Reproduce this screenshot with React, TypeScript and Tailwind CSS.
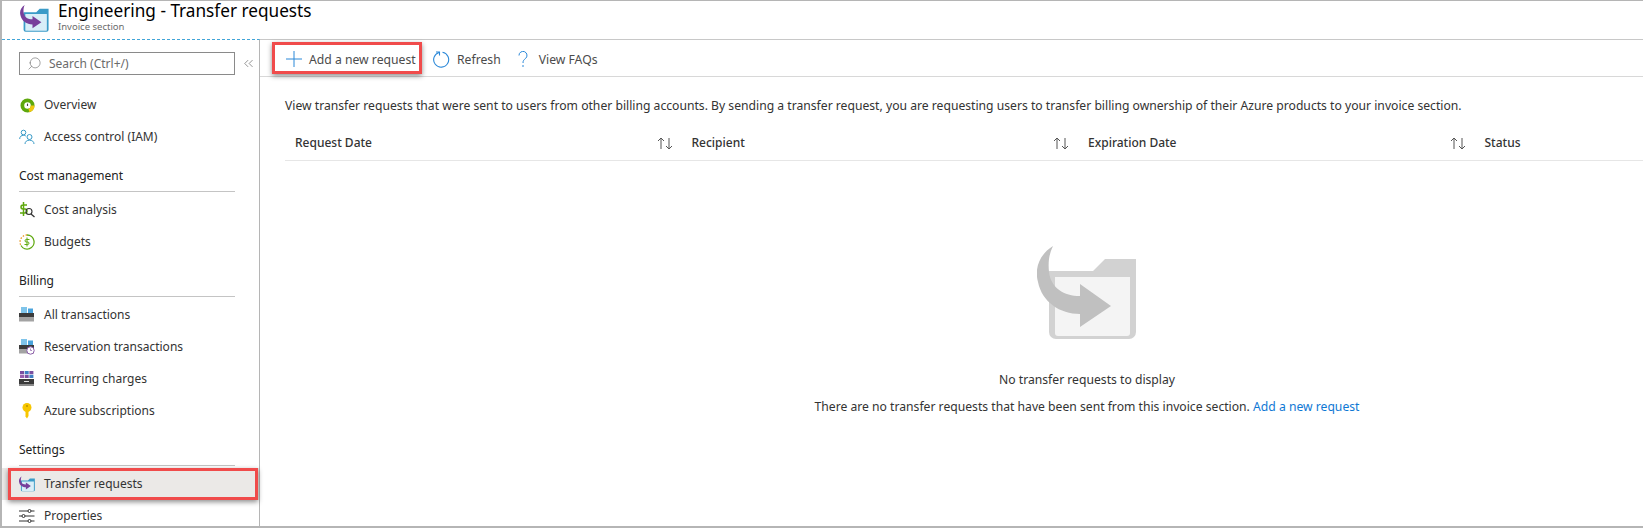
import { ChevronsLeft, Search } from "lucide-react"
import type { ReactNode } from "react"

// same folder + curved arrow shape is used for the page icon, nav item and empty state
const FolderArrow = ({ width, height, folder, inner, arrow }: { width: number; height: number; folder: string; inner: string; arrow: string }) => (
  <svg width={width} height={height} viewBox="0 0 100 94">
    <path d="M12 25H56L68 13H99V86a7 7 0 0 1-7 7H19a7 7 0 0 1-7-7z" fill={folder} />
    <path d="M18 31H93V87a3 3 0 0 1-3 3H21a3 3 0 0 1-3-3z" fill={inner} />
    <path d="M16 0C3 8-3 22 1 36C5 56 23 68 43 68V81L74 60L43 38V50C27 50 14 42 12 26C11 16 12 8 16 0z" fill={arrow} />
  </svg>
)

const OverviewIcon = () => (
  <svg width="15" height="15" viewBox="0 0 16 16">
    <circle cx="8" cy="8" r="5.500" fill="#fff" stroke="#5ea80d" strokeWidth="4" />
    <path d="M13.500 8a5.500 5.500 0 0 1-4 5.300" fill="none" stroke="#f2c811" strokeWidth="4" />
    <path d="M8 6V8.500" stroke="#444" strokeWidth="1.200" />
  </svg>
)

const PeopleIcon = () => (
  <svg width="16" height="16" viewBox="0 0 16 16" fill="none" stroke="#3a9bc8" strokeWidth="1">
    <circle cx="4.500" cy="3.500" r="2.300" />
    <path d="M.7 10c0-2.500 1.700-3.700 3.800-3.700 1 0 1.800.2 2.300.7" />
    <circle cx="10.500" cy="8" r="2.500" />
    <path d="M6 15c0-2.500 2-3.800 4.500-3.800S15 12.500 15 15" />
  </svg>
)

const CostIcon = () => (
  <svg width="16" height="16" viewBox="0 0 16 16" fill="none">
    <path d="M8 3H4a2 2 0 0 0 0 4h2a2 2 0 0 1 0 4H1M4.500 0v14" stroke="#5ea80d" strokeWidth="1.500" />
    <circle cx="10" cy="9.500" r="3" stroke="#333" strokeWidth="1.100" />
    <path d="M12 12l3.500 3" stroke="#333" strokeWidth="1.300" />
  </svg>
)

const BudgetIcon = () => (
  <svg width="16" height="16" viewBox="0 0 16 16" fill="none">
    <path d="M8 1a7 7 0 1 1-6 10.500" stroke="#5ea80d" strokeWidth="1.300" />
    <path d="M8 1a7 7 0 0 0-6 10.500" stroke="#e8951c" strokeWidth="1.300" strokeDasharray="1.500 1.500" />
    <path d="M10.500 5.500H7.300a1.250 1.250 0 0 0 0 2.500h1.400a1.250 1.250 0 0 1 0 2.500H5.500M8 3.500v9" stroke="#5ea80d" strokeWidth="1" />
  </svg>
)

const TransactionsIcon = ({ clock }: { clock?: boolean }) => (
  <svg width="16" height="16" viewBox="0 0 16 16">
    <rect x="2" y="0" width="6" height="6" fill="#7fc4ea" />
    <rect x="9" y="1.500" width="5" height="4.500" fill="#4aa3dc" />
    <rect x="0" y="6" width="15" height="4" fill="#3b3b3b" />
    <rect x="0" y="10" width="15" height="4.500" fill="#a3a3a3" />
    {clock && (
      <g>
        <circle cx="11.500" cy="11.500" r="3.700" fill="#fff" stroke="#8a5ca8" strokeWidth="1" />
        <path d="M11.500 9.500v2h1.500" fill="none" stroke="#8a5ca8" strokeWidth=".7" />
      </g>
    )}
  </svg>
)

const RecurringIcon = () => (
  <svg width="16" height="16" viewBox="0 0 16 16">
    {["#7a4fa0", "#3f7fc4", "#7a4fa0", "#9a5fae", "#7a4fa0", "#3f7fc4"].map((c, i) => (
      <rect key={i} x={1 + (i % 3) * 4.700} y={i < 3 ? 0 : 3.800} width="4" height="3.200" fill={c} />
    ))}
    <rect x="0" y="8" width="15" height="5" fill="#3b3b3b" />
    <rect x="0" y="13" width="15" height="2" fill="#8a8a8a" />
    <rect x="5" y="10" width="5" height="1" fill="#ddd" />
  </svg>
)

const KeyIcon = () => (
  <svg width="16" height="16" viewBox="0 0 16 16">
    <circle cx="8" cy="4.500" r="4.500" fill="#f7c600" />
    <path d="M6.500 8h3v5L8 15.500l-1.500-2z" fill="#f7c600" />
    <rect x="7" y="2" width="2" height="2" fill="#c79f00" />
  </svg>
)

const PropertiesIcon = () => (
  <svg width="16" height="16" viewBox="0 0 16 16" fill="none" stroke="#333" strokeWidth="1">
    <path d="M0 3h9M12 3h3.500M0 8h3M6 8h9.500M0 13h9M12 13h3.500" />
    <circle cx="10.500" cy="3" r="1.500" />
    <circle cx="4.500" cy="8" r="1.500" />
    <circle cx="10.500" cy="13" r="1.500" />
  </svg>
)

const SectionHead = ({ children }: { children: ReactNode }) => (
  <div className="ml-[17px] w-[216px] mt-[15px] mb-[2px] h-[24px] border-b border-[#c4c4c4] text-[#222] leading-[16px]">{children}</div>
)

const NavItem = ({ icon, label }: { icon: ReactNode; label: string }) => (
  <div className="flex items-center h-[32px] pl-[17px] text-[#333]">
    <span className="flex justify-center w-[16px] mr-[9px]">{icon}</span>
    {label}
  </div>
)

const SortArrows = () => (
  <svg width="17" height="13" viewBox="0 0 17 13" fill="none" stroke="#555" strokeWidth="1">
    <path d="M4 12V1M1 4l3-3 3 3" />
    <path d="M12 1v11M9 9l3 3 3-3" />
  </svg>
)

const columns = ["Request Date", "Recipient", "Expiration Date", "Status"]

export default function App() {
  return (
    <div className="w-[1643px] h-[528px] overflow-hidden bg-white flex flex-col border-l-2 border-b-2 border-t border-[#b5b5b5] text-[12px] font-['Noto_Sans','Open_Sans',sans-serif]">
      <header className="flex h-[38px] shrink-0">
        <div className="ml-[18px] mt-[4px] mr-[9px]">
          <FolderArrow width={29} height={27} folder="#3a9bc8" inner="#d8eef8" arrow="#773f9b" />
        </div>
        <div>
          <h1 className="text-[17.200px] leading-[19px] text-black">Engineering - Transfer requests</h1>
          <p className="text-[9.500px] leading-[12px] mt-[1px] text-[#6b6b6b]">Invoice section</p>
        </div>
      </header>

      <div className="flex flex-1 min-h-0">
        <aside className="w-[258px] shrink-0 border-t border-t-[#42a5d8] border-dashed border-r border-r-[#b5b5b5] [border-right-style:solid] relative">
          <div className="flex items-center mt-[12px] ml-[17px] mb-[14px]">
            <div className="flex items-center w-[216px] h-[23px] border border-[#8a8a8a] pl-[7px] text-[#6b6b6b]">
              <Search size={15} strokeWidth={1} className="-scale-x-100" />
              <span className="ml-[7px] mt-[1px]">Search (Ctrl+/)</span>
            </div>
            <ChevronsLeft size={15} strokeWidth={1} className="ml-[6px] text-[#555]" />
          </div>

          <NavItem icon={<OverviewIcon />} label="Overview" />
          <NavItem icon={<PeopleIcon />} label="Access control (IAM)" />
          <SectionHead>Cost management</SectionHead>
          <NavItem icon={<CostIcon />} label="Cost analysis" />
          <NavItem icon={<BudgetIcon />} label="Budgets" />
          <SectionHead>Billing</SectionHead>
          <NavItem icon={<TransactionsIcon />} label="All transactions" />
          <NavItem icon={<TransactionsIcon clock />} label="Reservation transactions" />
          <NavItem icon={<RecurringIcon />} label="Recurring charges" />
          <NavItem icon={<KeyIcon />} label="Azure subscriptions" />
          <SectionHead>Settings</SectionHead>
          <div className="relative bg-[#ebe9e7]">
            <NavItem icon={<FolderArrow width={17} height={16} folder="#3a9bc8" inner="#d8eef8" arrow="#773f9b" />} label="Transfer requests" />
            <div className="absolute left-[6px] top-0 w-[250px] h-[32px] border-[3px] border-[#f04b4b] shadow-[0_2px_5px_rgba(0,0,0,0.45)]" />
          </div>
          <NavItem icon={<PropertiesIcon />} label="Properties" />
        </aside>

        <main className="flex-1 min-w-0 border-t border-[#c8c8c8]">
          <div className="flex items-center h-[37px] pt-[2px] border-b border-[#d8d8d8] text-[#4b4b4b] text-[12.200px]">
            <div className="relative flex items-center h-[34px] ml-[12px] pl-[14px] w-[150px]">
              <svg width="16" height="16" viewBox="0 0 16 16" stroke="#2b88d8" strokeWidth="1">
                <path d="M8 0v16M0 8h16" />
              </svg>
              <span className="ml-[7px] mt-[2px]">Add a new request</span>
              <div className="absolute left-0 top-0 w-[150px] h-[32px] border-[3px] border-[#f04b4b] shadow-[0_2px_5px_rgba(0,0,0,0.45)]" />
            </div>
            <svg width="17" height="17" viewBox="0 0 17 17" fill="none" stroke="#2b88d8" strokeWidth="1.100" className="ml-[11px]">
              <path d="M6 1.500A7.500 7.500 0 1 0 9.500 1.300" />
              <path d="M3 1h3.500v3.500" />
            </svg>
            <span className="ml-[7px] mt-[2px]">Refresh</span>
            <svg width="10" height="17" viewBox="0 0 10 17" fill="none" stroke="#2b88d8" strokeWidth="1" className="ml-[17px]">
              <path d="M1 4.500a4 4 0 1 1 6.500 3C6 8.800 5 9.500 5 12" />
              <path d="M5 14v2" />
            </svg>
            <span className="ml-[11px] mt-[2px]">View FAQs</span>
          </div>

          <p className="ml-[25px] mt-[20px] leading-[18px] text-[#333] whitespace-nowrap text-[12.160px]">
            View transfer requests that were sent to users from other billing accounts. By sending a transfer request, you are requesting users to transfer billing ownership of their Azure products to your invoice section.
          </p>

          <div className="ml-[25px] mt-[19px] flex h-[27px] items-start border-b border-[#e6e6e6] text-[#333] font-medium">
            {columns.map((c, i) => (
              <div key={c} className={`flex items-center justify-between pl-[10px] leading-[18px] ${i < 3 ? "w-[396.500px] pr-[8px]" : ""}`}>
                {c}
                {i < 3 && <SortArrows />}
              </div>
            ))}
          </div>

          <div className="ml-[271px] flex flex-col items-center text-[#333] text-[12.160px]">
            <div className="mt-[85px]">
              <FolderArrow width={100} height={94} folder="#d2d2d2" inner="#f4f4f4" arrow="#c0c0c0" />
            </div>
            <p className="mt-[31px] leading-[18px]">No transfer requests to display</p>
            <p className="mt-[9px] leading-[18px]">
              There are no transfer requests that have been sent from this invoice section.{" "}
              <span className="text-[#0f78d4]">Add a new request</span>
            </p>
          </div>
        </main>
      </div>
    </div>
  )
}
